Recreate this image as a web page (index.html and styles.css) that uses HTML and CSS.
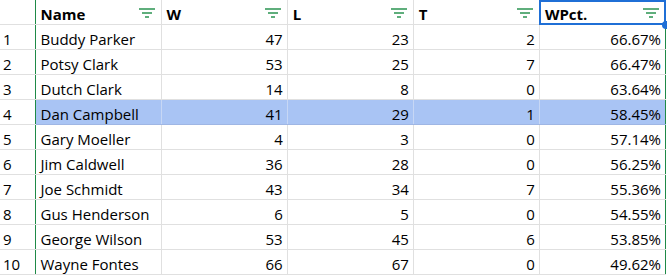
FILE: index.html
```html
<!DOCTYPE html>
<html>
<head>
<meta charset="utf-8">
<link rel="stylesheet" href="styles.css">
</head>
<body>
<table class="sheet">
  <colgroup>
    <col class="c-num"><col class="c-col"><col class="c-col"><col class="c-col"><col class="c-col"><col class="c-col">
  </colgroup>
  <thead>
    <tr>
      <th class="rn"></th>
      <th><span class="hd">Name</span><span class="flt"><i></i><i></i><i></i></span></th>
      <th><span class="hd">W</span><span class="flt"><i></i><i></i><i></i></span></th>
      <th><span class="hd">L</span><span class="flt"><i></i><i></i><i></i></span></th>
      <th><span class="hd">T</span><span class="flt"><i></i><i></i><i></i></span></th>
      <th class="sel"><span class="hd">WPct.</span><span class="flt"><i></i><i></i><i></i></span><span class="dot"></span></th>
    </tr>
  </thead>
  <tbody>
    <tr><td class="rn">1</td><td>Buddy Parker</td><td class="n">47</td><td class="n">23</td><td class="n">2</td><td class="n last">66.67%</td></tr>
    <tr><td class="rn">2</td><td>Potsy Clark</td><td class="n">53</td><td class="n">25</td><td class="n">7</td><td class="n last">66.47%</td></tr>
    <tr><td class="rn">3</td><td>Dutch Clark</td><td class="n">14</td><td class="n">8</td><td class="n">0</td><td class="n last">63.64%</td></tr>
    <tr class="hl"><td class="rn">4</td><td>Dan Campbell</td><td class="n">41</td><td class="n">29</td><td class="n">1</td><td class="n last">58.45%</td></tr>
    <tr><td class="rn">5</td><td>Gary Moeller</td><td class="n">4</td><td class="n">3</td><td class="n">0</td><td class="n last">57.14%</td></tr>
    <tr><td class="rn">6</td><td>Jim Caldwell</td><td class="n">36</td><td class="n">28</td><td class="n">0</td><td class="n last">56.25%</td></tr>
    <tr><td class="rn">7</td><td>Joe Schmidt</td><td class="n">43</td><td class="n">34</td><td class="n">7</td><td class="n last">55.36%</td></tr>
    <tr><td class="rn">8</td><td>Gus Henderson</td><td class="n">6</td><td class="n">5</td><td class="n">0</td><td class="n last">54.55%</td></tr>
    <tr><td class="rn">9</td><td>George Wilson</td><td class="n">53</td><td class="n">45</td><td class="n">6</td><td class="n last">53.85%</td></tr>
    <tr><td class="rn">10</td><td>Wayne Fontes</td><td class="n">66</td><td class="n">67</td><td class="n">0</td><td class="n last">49.62%</td></tr>
  </tbody>
</table>
</body>
</html>
```
FILE: styles.css
```css
html, body {
  margin: 0;
  padding: 0;
  background: #ffffff;
}
.sheet {
  border-collapse: collapse;
  table-layout: fixed;
  width: 666px;
  font-family: "Open Sans", "Liberation Sans", sans-serif;
  font-size: 15px;
  color: #000;
}
.c-num { width: 35px; }
.c-col { width: 126px; }
.sheet th, .sheet td {
  height: 20px;
  padding: 4px 4px 0 5px;
  border-right: 1px solid #e0e0e0;
  border-bottom: 1px solid #e0e0e0;
  white-space: nowrap;
  overflow: visible;
  text-align: left;
  line-height: 20px;
  vertical-align: top;
}
.sheet th {
  position: relative;
  font-weight: 700;
}
.sheet .rn {
  padding-left: 3px;
  border-right: 1px solid #1f8a47;
}
.sheet th.rn { border-bottom: 1px solid #e0e0e0; }
.sheet .n { text-align: right; }
.sheet .last { border-right: 1px solid #1f8a47; }
.sheet th:last-child { border-right: 1px solid #1f8a47; }
.hl td:not(.rn) {
  background: #a9c4f4;
  border-right-color: #c7d7f5;
  border-bottom-color: #9fb6e4;
}
.hl td.last { border-right-color: #1f8a47; }
.flt {
  position: absolute;
  right: 6px;
  top: 8px;
  width: 16px;
  height: 10px;
  display: flex;
  flex-direction: column;
  align-items: center;
  gap: 2px;
}
.flt i {
  display: block;
  height: 2px;
  background: #5fae7c;
}
.flt i:nth-child(1) { width: 16px; }
.flt i:nth-child(2) { width: 10px; }
.flt i:nth-child(3) { width: 4px; }
.sel::after {
  content: "";
  position: absolute;
  left: -1px;
  top: 0;
  right: -1px;
  bottom: -1px;
  border: 2px solid #1f6fd6;
  pointer-events: none;
}
.dot {
  position: absolute;
  right: -5px;
  bottom: -5px;
  width: 8px;
  height: 8px;
  border-radius: 50%;
  background: #1f6fd6;
  z-index: 2;
}
```
